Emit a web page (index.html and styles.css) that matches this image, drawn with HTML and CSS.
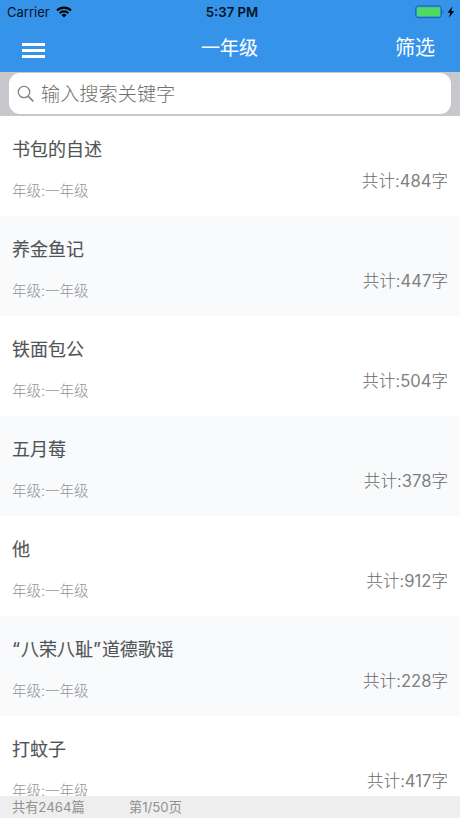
FILE: index.html
```html
<!DOCTYPE html>
<html lang="zh-CN">
<head>
  <meta charset="UTF-8">
  <meta name="viewport" content="width=device-width, initial-scale=1.0">
  <title>一年级</title>
  <link rel="stylesheet" href="styles.css">
</head>
<body>
  <header>
    <div class="status">
      <div class="carrier">
        <span>Carrier</span>
        <svg width="16" height="12" viewBox="0 0 16 12" fill="none" stroke="#000" stroke-width="2.1">
          <path d="M1 4.5a10 10 0 0 1 14 0"/>
          <path d="M3.6 7.2a6.3 6.3 0 0 1 8.8 0"/>
          <path d="M8 11.4L5.5 8.9a3.6 3.6 0 0 1 5 0z" fill="#000" stroke="none"/>
        </svg>
      </div>
      <div class="time">5:37 PM</div>
      <div class="power">
        <svg width="40" height="14" viewBox="0 0 40 14">
          <rect x=".7" y="1" width="25.6" height="11.6" rx="2.5" fill="none" stroke="#20649f" stroke-width="1"/>
          <rect x="2" y="2.3" width="23" height="9" rx="1" fill="#4cd964"/>
          <path d="M27.6 5v3.6q1-.5 1-1.8t-1-1.8z" fill="#20649f"/>
          <path d="M37.4 1.2L32.6 7.7h2.8L34 12.8 39.3 5.9h-3z" fill="#000"/>
        </svg>
      </div>
    </div>
    <nav class="navbar">
      <div class="menu"><i></i><i></i><i></i></div>
      <h1>一年级</h1>
      <div class="filter">筛选</div>
    </nav>
  </header>

  <div class="search">
    <div class="search-box">
      <svg width="18" height="18" viewBox="0 0 18 18" fill="none" stroke="#858585" stroke-width="1.3">
        <circle cx="7" cy="7" r="5.7"/>
        <path d="M11.1 11.1l5.2 5.2" stroke-width="1.7"/>
      </svg>
      <span>输入搜索关键字</span>
    </div>
  </div>

  <ul class="list">
    <li>
      <div><h2>书包的自述</h2><p>年级:一年级</p></div>
      <span class="count">共计:<b>484</b>字</span>
    </li>
    <li>
      <div><h2>养金鱼记</h2><p>年级:一年级</p></div>
      <span class="count">共计:<b>447</b>字</span>
    </li>
    <li>
      <div><h2>铁面包公</h2><p>年级:一年级</p></div>
      <span class="count">共计:<b>504</b>字</span>
    </li>
    <li>
      <div><h2>五月莓</h2><p>年级:一年级</p></div>
      <span class="count">共计:<b>378</b>字</span>
    </li>
    <li>
      <div><h2>他</h2><p>年级:一年级</p></div>
      <span class="count">共计:<b>912</b>字</span>
    </li>
    <li>
      <div><h2><q>“</q>八荣八耻<q>”</q>道德歌谣</h2><p>年级:一年级</p></div>
      <span class="count">共计:<b>228</b>字</span>
    </li>
    <li>
      <div><h2>打蚊子</h2><p>年级:一年级</p></div>
      <span class="count">共计:<b>417</b>字</span>
    </li>
  </ul>

  <footer>
    <span class="total">共有2464篇</span>
    <span>第1/50页</span>
  </footer>
</body>
</html>
```

FILE: styles.css
```css
* {
  box-sizing: border-box;
  margin: 0;
  padding: 0;
}
body {
  display: flex;
  flex-direction: column;
  height: 818px;
  overflow: hidden;
  background: #fff;
  font-family: Inter, "Noto Sans CJK SC", sans-serif;
  white-space: nowrap;
}
svg {
  display: block;
}
header {
  flex: none;
  height: 72px;
  background: #3693ea;
}
.status {
  display: grid;
  grid-template-columns: 1fr auto 1fr;
  height: 24px;
  padding: 0 5px 0 7px;
  align-items: center;
  color: #05121f;
  font-size: 13px;
}
.carrier {
  display: flex;
  gap: 6px;
  align-items: center;
}
.time {
  padding-left: 2px;
  font-weight: 600;
  font-size: 13.2px;
}
.power {
  justify-self: end;
}
.navbar {
  display: grid;
  grid-template-columns: 1fr auto 1fr;
  height: 46px;
  padding: 0 25px 0 24px;
  align-items: center;
  color: #fff;
}
.menu {
  display: grid;
  gap: 3px;
  width: 23px;
  margin: 6px 0 0 -2px;
}
.menu i {
  height: 3px;
  background: #fff;
}
.navbar h1 {
  padding-bottom: 2px;
  font-size: 19px;
  font-weight: 400;
  -webkit-text-stroke: 0.1px;
}
.filter {
  justify-self: end;
  padding-bottom: 2px;
  font-size: 20px;
}
.search {
  flex: none;
  height: 44px;
  padding: 1px 9px 2px;
  background: #c8c8cc;
}
.search-box {
  display: flex;
  align-items: center;
  gap: 6px;
  height: 41px;
  padding-left: 8px;
  border-radius: 11px;
  background: #fff;
  color: #707070;
  font-size: 19.2px;
  font-weight: 300;
}
.search-box span {
  padding-bottom: 2px;
}
.list {
  flex: 1;
  min-height: 0;
  overflow: hidden;
  list-style: none;
}
.list li {
  display: flex;
  justify-content: space-between;
  height: 100px;
  padding: 0 12px;
}
.list li:nth-child(even) {
  background: #f8fafc;
}
.list h2 {
  margin-top: 19px;
  color: #505456;
  font-size: 18px;
  font-weight: 400;
  line-height: 30px;
  -webkit-text-stroke: 0.12px;
}
.list q {
  font-family: Inter, sans-serif;
  letter-spacing: 1px;
  quotes: none;
}
.list p {
  margin-top: 16px;
  color: #949494;
  font-size: 14.5px;
  font-weight: 300;
  line-height: 20px;
}
.count {
  margin-top: 52px;
  color: #686868;
  font-size: 16.6px;
  font-weight: 300;
  line-height: 26px;
}
.count b {
  color: #808080;
  font-weight: 400;
}
footer {
  display: flex;
  flex: none;
  height: 22px;
  padding-left: 12px;
  background: #eee;
  color: #909090;
  font-size: 13.2px;
  line-height: 22px;
}
.total {
  width: 117px;
}
```
